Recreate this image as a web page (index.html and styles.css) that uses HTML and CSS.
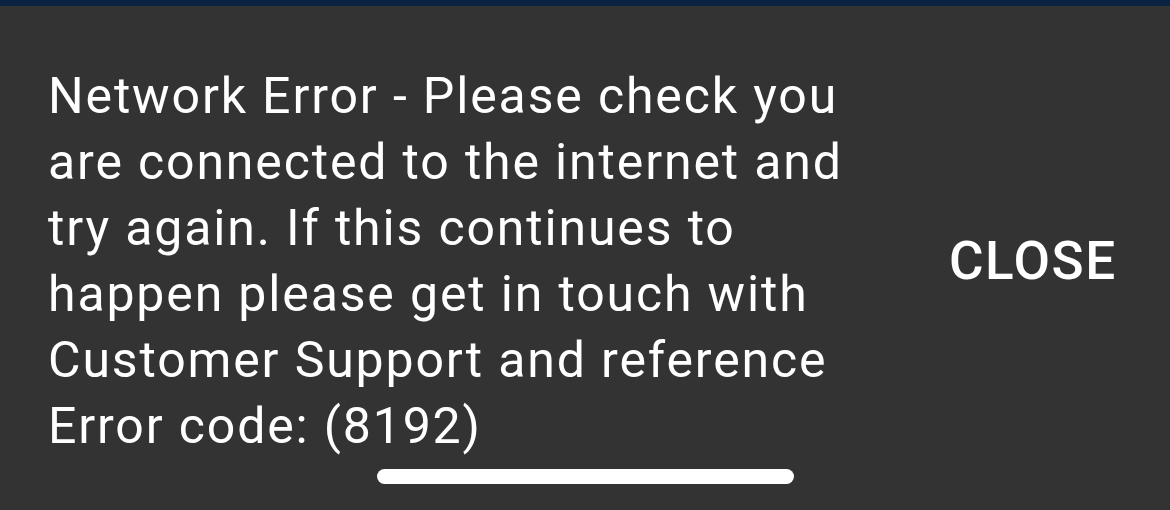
FILE: index.html
```html
<!DOCTYPE html>
<html>
<head>
<meta charset="utf-8">
<link rel="stylesheet" href="styles.css">
</head>
<body>
<div class="topbar"></div>
<div class="snackbar">
  <p class="message">Network Error - Please check you<br>are connected to the internet and<br>try again. If this continues to<br>happen please get in touch with<br>Customer Support and reference<br>Error code: (8192)</p>
  <div class="action">CLOSE</div>
</div>
<div class="home"><div class="home-bar"></div></div>
</body>
</html>
```

FILE: styles.css
```css
html, body {
  margin: 0;
  padding: 0;
  background: #333333;
  width: 1170px;
  height: 510px;
  overflow: hidden;
  font-family: Roboto, "Noto Sans", sans-serif;
  color: #ffffff;
}
.topbar {
  height: 6px;
  background: #0b2342;
}
.snackbar {
  display: flex;
  align-items: center;
  padding: 57px 0 0 48px;
}
.message {
  margin: 0;
  font-size: 50px;
  line-height: 66px;
  font-weight: 400;
  letter-spacing: 1.85px;
  width: 860px;
  white-space: nowrap;
}
.action {
  font-size: 53px;
  font-weight: 500;
  letter-spacing: 1.5px;
  margin-left: 41px;
  margin-top: 0;
}
.home {
  display: flex;
  justify-content: center;
  padding-top: 10px;
  padding-left: 1px;
}
.home-bar {
  width: 417px;
  height: 15px;
  border-radius: 8px;
  background: #ffffff;
}
```
